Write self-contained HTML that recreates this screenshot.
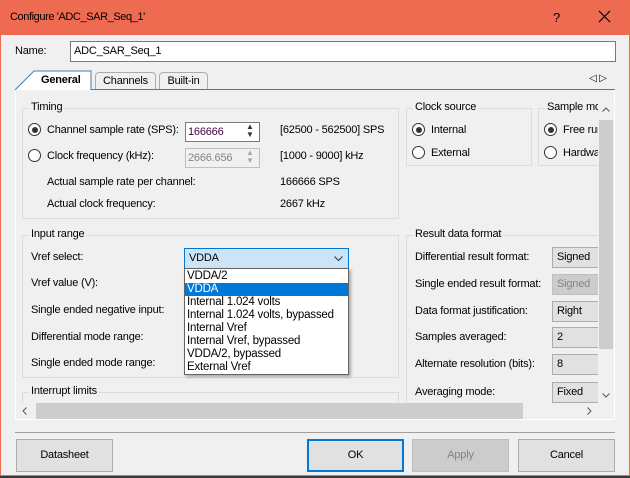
<!DOCTYPE html>
<html><head><style>
*{margin:0;padding:0;box-sizing:border-box}
body{width:630px;height:478px;overflow:hidden;background:#3a3a3a;font-family:"Liberation Sans",sans-serif;font-size:11px;letter-spacing:-0.2px;color:#000;position:relative}
.a{position:absolute;white-space:nowrap}
.gb{position:absolute;border:1px solid #dcdcdc}
.gt{position:absolute;background:#f0f0f0;padding:0 2px;top:-8px;left:6px;white-space:nowrap}
.rad{position:absolute;width:13px;height:13px;border:1px solid #333;border-radius:50%;background:#fff}
.rad.on::after{content:"";position:absolute;left:2.5px;top:2.5px;width:6px;height:6px;border-radius:50%;background:#333}
.btn{position:absolute;height:33px;border:1px solid #adadad;background:#e1e1e1;text-align:center;line-height:31px}
.cb{position:absolute;height:21px;border:1px solid #adadad;background:#e1e1e1;padding-left:4px;line-height:19px;overflow:hidden}
</style></head><body>
<div class="a" style="left:0;top:0;width:630px;height:476px;background:#ee6a50"></div>
<div class="a" style="left:1px;top:35px;width:628px;height:440px;background:#f0f0f0"></div>
<div class="a" style="left:10px;top:11px;font-size:11px;letter-spacing:-0.4px">Configure 'ADC_SAR_Seq_1'</div>
<div class="a" style="left:553px;top:10px;font-size:13px">?</div>
<svg class="a" style="left:598px;top:10px" width="13" height="13"><path d="M1 1L12 12M12 1L1 12" stroke="#000" stroke-width="1.2"/></svg>

<div class="a" style="left:15px;top:45px">Name:</div>
<div class="a" style="left:70px;top:41px;width:546px;height:21px;border:1px solid #7a7a7a;background:#fff;padding-left:3px;line-height:19px">ADC_SAR_Seq_1</div>

<div class="a" style="left:15px;top:89px;width:600px;height:1px;background:#3c7fb1"></div>
<div class="a" style="left:95px;top:72px;width:61px;height:17px;border:1px solid #acacac;border-bottom:none;background:#f0f0f0;border-radius:4px 4px 0 0;text-align:center;line-height:17px">Channels</div>
<div class="a" style="left:159px;top:72px;width:49px;height:17px;border:1px solid #acacac;border-bottom:none;background:#f0f0f0;border-radius:4px 4px 0 0;text-align:center;line-height:17px">Built-in</div>
<svg class="a" style="left:14px;top:70px" width="80" height="21"><path d="M1 20L20 1H77V20" fill="#fff" stroke="#3c7fb1"/></svg>
<div class="a" style="left:41px;top:74px;font-weight:bold">General</div>
<div class="a" style="left:589px;top:73px;font-size:10px">◁ ▷</div>

<div class="a" style="left:15px;top:90px;width:600px;height:330px;border:1px solid #fff;border-top:none;background:#f0f0f0"></div>

<div class="gb" style="left:22px;top:108px;width:377px;height:111px"><span class="gt">Timing</span></div>
<div class="rad on" style="left:28px;top:123px"></div>
<div class="a" style="left:47px;top:124px">Channel sample rate (SPS):</div>
<div class="a" style="left:185px;top:122px;width:75px;height:20px;border:1px solid #7a7a7a;background:#fff;padding-left:2px;line-height:18px;color:#400040">166666</div>
<div class="a" style="left:246px;top:123px;font-size:8px;line-height:8px;color:#333">▲<br>▼</div>
<div class="a" style="left:280px;top:124px">[62500 - 562500] SPS</div>
<div class="rad" style="left:28px;top:149px"></div>
<div class="a" style="left:47px;top:150px">Clock frequency (kHz):</div>
<div class="a" style="left:185px;top:148px;width:75px;height:20px;border:1px solid #bfbfbf;background:#f0f0f0;padding-left:2px;line-height:18px;color:#838383">2666.656</div>
<div class="a" style="left:246px;top:149px;font-size:8px;line-height:8px;color:#aaa">▲<br>▼</div>
<div class="a" style="left:280px;top:150px">[1000 - 9000] kHz</div>
<div class="a" style="left:47px;top:176px">Actual sample rate per channel:</div>
<div class="a" style="left:280px;top:176px">166666 SPS</div>
<div class="a" style="left:47px;top:198px">Actual clock frequency:</div>
<div class="a" style="left:280px;top:198px">2667 kHz</div>

<div class="gb" style="left:406px;top:108px;width:126px;height:58px"><span class="gt">Clock source</span></div>
<div class="rad on" style="left:412px;top:123px"></div><div class="a" style="left:431px;top:124px">Internal</div>
<div class="rad" style="left:412px;top:146px"></div><div class="a" style="left:431px;top:147px">External</div>
<div class="gb" style="left:538px;top:108px;width:70px;height:58px;border-right:none"><span class="gt">Sample mo</span></div>
<div class="rad on" style="left:544px;top:123px"></div><div class="a" style="left:563px;top:124px;width:35px;overflow:hidden">Free run</div>
<div class="rad" style="left:544px;top:146px"></div><div class="a" style="left:563px;top:147px;width:35px;overflow:hidden">Hardware</div>

<div class="gb" style="left:22px;top:235px;width:377px;height:143px"><span class="gt">Input range</span></div>
<div class="a" style="left:31px;top:251px">Vref select:</div>
<div class="a" style="left:31px;top:277px">Vref value (V):</div>
<div class="a" style="left:31px;top:304px">Single ended negative input:</div>
<div class="a" style="left:31px;top:331px">Differential mode range:</div>
<div class="a" style="left:31px;top:357px">Single ended mode range:</div>
<div class="gb" style="left:22px;top:392px;width:377px;height:12px;border-bottom:none"><span class="gt">Interrupt limits</span></div>

<div class="gb" style="left:406px;top:235px;width:200px;height:170px;border-right:none;border-bottom:none"><span class="gt">Result data format</span></div>
<div class="a" style="left:415px;top:251px">Differential result format:</div>
<div class="a" style="left:415px;top:278px">Single ended result format:</div>
<div class="a" style="left:415px;top:305px">Data format justification:</div>
<div class="a" style="left:415px;top:331px">Samples averaged:</div>
<div class="a" style="left:415px;top:358px">Alternate resolution (bits):</div>
<div class="a" style="left:415px;top:386px">Averaging mode:</div>
<div class="cb" style="left:552px;top:247px;width:46px;border-right:none">Signed</div>
<div class="cb" style="left:552px;top:274px;width:46px;border-right:none;background:#ccc;border-color:#bfbfbf;color:#838383">Signed</div>
<div class="cb" style="left:552px;top:301px;width:46px;border-right:none">Right</div>
<div class="cb" style="left:552px;top:327px;width:46px;border-right:none">2</div>
<div class="cb" style="left:552px;top:354px;width:46px;border-right:none">8</div>
<div class="cb" style="left:552px;top:382px;width:46px;border-right:none">Fixed Re</div>

<div class="a" style="left:598px;top:100px;width:16px;height:303px;background:#f0f0f0"></div>
<div class="a" style="left:599px;top:120px;width:14px;height:229px;background:#cdcdcd"></div>
<svg class="a" style="left:602px;top:107px" width="8" height="5"><path d="M0.5 4.5L4 1L7.5 4.5" fill="none" stroke="#555"/></svg>
<svg class="a" style="left:602px;top:393px" width="8" height="5"><path d="M0.5 0.5L4 4L7.5 0.5" fill="none" stroke="#555"/></svg>
<div class="a" style="left:17px;top:403px;width:581px;height:16px;background:#f0f0f0"></div>
<div class="a" style="left:36px;top:403px;width:487px;height:16px;background:#cdcdcd"></div>
<svg class="a" style="left:22px;top:407px" width="5" height="8"><path d="M4.5 0.5L1 4L4.5 7.5" fill="none" stroke="#555"/></svg>
<svg class="a" style="left:587px;top:407px" width="5" height="8"><path d="M0.5 0.5L4 4L0.5 7.5" fill="none" stroke="#555"/></svg>

<div class="a" style="left:184px;top:248px;width:165px;height:21px;border:1px solid #0078d7;background:#cce4f7;padding-left:4px;line-height:19px">VDDA</div>
<svg class="a" style="left:334px;top:256px" width="9" height="6"><path d="M0.5 0.5L4.5 4.5L8.5 0.5" fill="none" stroke="#333"/></svg>
<div class="a" style="left:184px;top:268px;width:165px;height:107px;border:1px solid #646464;background:#fff;box-shadow:2px 2px 3px rgba(0,0,0,.3);line-height:13px;padding-top:1px;font-size:11.5px">
<div style="padding-left:2px">VDDA/2</div>
<div style="padding-left:2px;background:#0078d7;color:#fff">VDDA</div>
<div style="padding-left:2px">Internal 1.024 volts</div>
<div style="padding-left:2px">Internal 1.024 volts, bypassed</div>
<div style="padding-left:2px">Internal Vref</div>
<div style="padding-left:2px">Internal Vref, bypassed</div>
<div style="padding-left:2px">VDDA/2, bypassed</div>
<div style="padding-left:2px">External Vref</div>
</div>

<div class="a" style="left:15px;top:432px;width:600px;height:1px;background:#a0a0a0"></div>
<div class="btn" style="left:16px;top:439px;width:97px">Datasheet</div>
<div class="btn" style="left:307px;top:439px;width:97px;border:2px solid #0078d7;line-height:29px">OK</div>
<div class="btn" style="left:412px;top:439px;width:97px;background:#ccc;border-color:#bfbfbf;color:#838383">Apply</div>
<div class="btn" style="left:518px;top:439px;width:97px">Cancel</div>
</body></html>
